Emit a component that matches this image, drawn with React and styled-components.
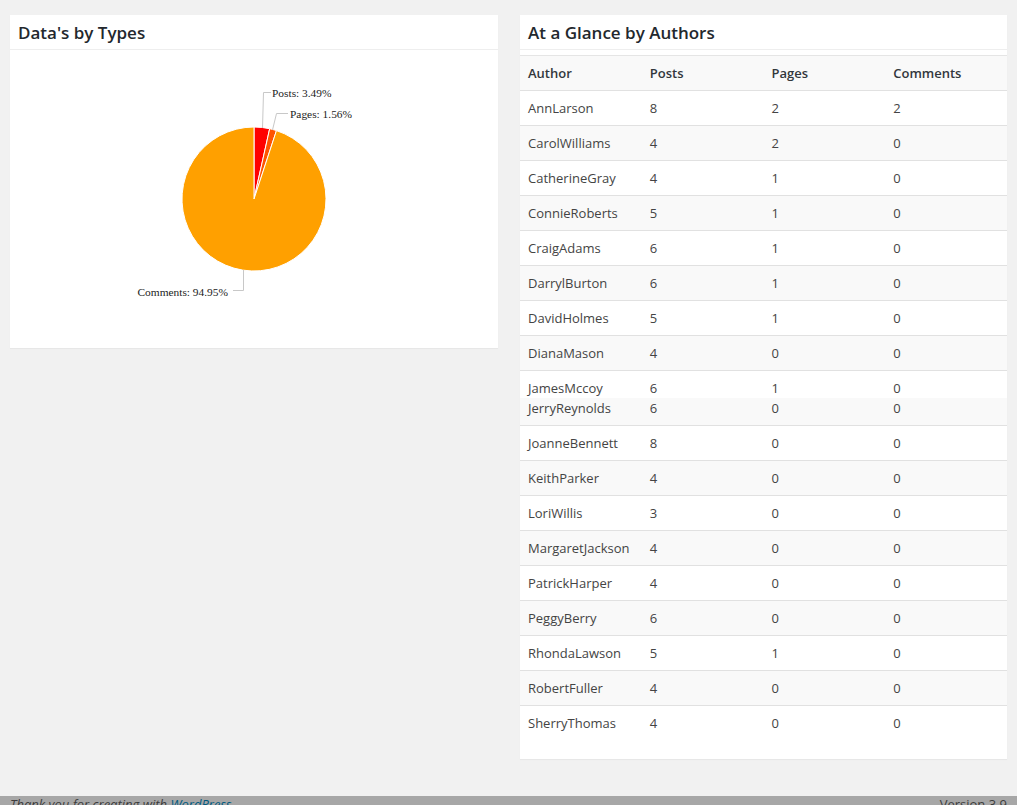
import React from 'react';
import styled, { createGlobalStyle } from 'styled-components';

const GlobalStyle = createGlobalStyle`
  html, body {
    margin: 0;
    padding: 0;
    background: #f1f1f1;
  }
  body {
    font-family: "Open Sans", "Liberation Sans", sans-serif;
    color: #444;
  }
`;

const Page = styled.div`
  display: flex;
  flex-direction: column;
  height: 805px;
  overflow: hidden;
`;

const Main = styled.div`
  flex: 1;
  display: flex;
  align-items: flex-start;
  gap: 22px;
  padding: 15px 10px 0;
`;

const Card = styled.div`
  width: ${({ $width }) => $width}px;
  background: #fff;
  box-shadow: 0 1px 1px rgba(0, 0, 0, 0.04);
  box-sizing: border-box;
  padding-bottom: ${({ $padBottom }) => $padBottom || 0}px;
`;

const CardHeader = styled.h3`
  margin: 0;
  height: 34px;
  padding: 0 8px;
  display: flex;
  align-items: center;
  font-size: 17px;
  font-weight: 600;
  color: #23282d;
  border-bottom: 1px solid #eee;
`;

const ChartArea = styled.div`
  display: flex;
  justify-content: center;
  height: 298px;
`;

const TableWrap = styled.div`
  margin-top: 5px;
  border-top: 1px solid #e5e5e5;
`;

const Row = styled.div`
  display: grid;
  grid-template-columns: repeat(4, 1fr);
  box-sizing: border-box;
  height: ${({ $height }) => $height}px;
  padding-top: ${({ $offset }) => $offset}px;
  overflow: hidden;
  background: ${({ $stripe }) => ($stripe ? '#f9f9f9' : '#fff')};
  border-bottom: ${({ $noBorder }) => ($noBorder ? 'none' : '1px solid #e1e1e1')};
`;

const Cell = styled.div`
  padding: 0 8px;
  font-size: 13px;
  line-height: 20px;
  white-space: nowrap;
  color: #444;
`;

const HeadCell = styled(Cell)`
  font-weight: 600;
  color: #32373c;
`;

const Footer = styled.div`
  height: 9px;
  flex-shrink: 0;
  background: #a7a7a7;
  display: flex;
  justify-content: space-between;
  padding: 0 10px;
  font-size: 13px;
  line-height: 18px;
  font-style: italic;
  color: #3c3c3c;
  overflow: hidden;
`;

const FooterText = styled.span`
  margin-top: -1px;
`;

const FooterLink = styled.a`
  color: #005a80;
  text-decoration: none;
`;

const Version = styled.span`
  font-style: normal;
  margin-top: -1px;
`;

const PIE = [
  { label: 'Posts', value: 3.49, color: '#ff0000' },
  { label: 'Pages', value: 1.56, color: '#ff5400' },
  { label: 'Comments', value: 94.95, color: '#ffa000' },
];

const AUTHORS = [
  ['AnnLarson', 8, 2, 2],
  ['CarolWilliams', 4, 2, 0],
  ['CatherineGray', 4, 1, 0],
  ['ConnieRoberts', 5, 1, 0],
  ['CraigAdams', 6, 1, 0],
  ['DarrylBurton', 6, 1, 0],
  ['DavidHolmes', 5, 1, 0],
  ['DianaMason', 4, 0, 0],
  ['JamesMccoy', 6, 1, 0],
  ['JerryReynolds', 6, 0, 0],
  ['JoanneBennett', 8, 0, 0],
  ['KeithParker', 4, 0, 0],
  ['LoriWillis', 3, 0, 0],
  ['MargaretJackson', 4, 0, 0],
  ['PatrickHarper', 4, 0, 0],
  ['PeggyBerry', 6, 0, 0],
  ['RhondaLawson', 5, 1, 0],
  ['RobertFuller', 4, 0, 0],
  ['SherryThomas', 4, 0, 0],
];

const ROW_SHAPE = {
  JamesMccoy: { height: 27, offset: 7, noBorder: true },
  JerryReynolds: { height: 28, offset: 0 },
};

const CX = 244;
const CY = 149;
const R = 72;

const point = (deg, r = R) => {
  const a = ((deg - 90) * Math.PI) / 180;
  return [CX + r * Math.cos(a), CY + r * Math.sin(a)];
};

const slicePath = (start, end) => {
  const [x1, y1] = point(start);
  const [x2, y2] = point(end);
  const large = end - start > 180 ? 1 : 0;
  return `M${CX},${CY} L${x1},${y1} A${R},${R} 0 ${large} 1 ${x2},${y2} Z`;
};

const PieChart = () => {
  let acc = 0;
  const slices = PIE.map((s) => {
    const start = acc;
    acc += (s.value / 100) * 360;
    return { ...s, start, end: acc };
  });

  return (
    <svg width="488" height="298" viewBox="0 0 488 298">
      {slices.map((s) => (
        <path
          key={s.label}
          d={slicePath(s.start, s.end)}
          fill={s.color}
          stroke="#fff"
          strokeWidth="1"
          strokeLinejoin="round"
        />
      ))}
      <g fill="none" stroke="#c8c8c8" strokeWidth="1">
        <polyline points="252.5,78 253.5,42.5 261,42.5" />
        <polyline points="262.5,80 266.5,63.5 278,63.5" />
        <polyline points="233.5,220 233.5,240.5 223,240.5" />
      </g>
      <g fontFamily='"Liberation Serif", "Times New Roman", serif' fontSize="11.4" fill="#222">
        <text x="262" y="46.5">Posts: 3.49%</text>
        <text x="280" y="67.5">Pages: 1.56%</text>
        <text x="218" y="245.5" textAnchor="end">Comments: 94.95%</text>
      </g>
    </svg>
  );
};

const App = () => (
  <Page>
    <GlobalStyle />
    <Main>
      <Card $width={488}>
        <CardHeader>Data's by Types</CardHeader>
        <ChartArea>
          <PieChart />
        </ChartArea>
      </Card>
      <Card $width={487} $padBottom={19}>
        <CardHeader>At a Glance by Authors</CardHeader>
        <TableWrap>
          <Row $height={35} $offset={7} $stripe>
            <HeadCell>Author</HeadCell>
            <HeadCell>Posts</HeadCell>
            <HeadCell>Pages</HeadCell>
            <HeadCell>Comments</HeadCell>
          </Row>
          {AUTHORS.map(([name, posts, pages, comments], i) => {
            const last = i === AUTHORS.length - 1;
            const shape = ROW_SHAPE[name] || { height: last ? 34 : 35, offset: 7 };
            return (
              <Row
                key={name}
                $height={shape.height}
                $offset={shape.offset}
                $noBorder={shape.noBorder || last}
                $stripe={i % 2 === 1}
              >
                <Cell>{name}</Cell>
                <Cell>{posts}</Cell>
                <Cell>{pages}</Cell>
                <Cell>{comments}</Cell>
              </Row>
            );
          })}
        </TableWrap>
      </Card>
    </Main>
    <Footer>
      <FooterText>
        Thank you for creating with <FooterLink href="#">WordPress</FooterLink>.
      </FooterText>
      <Version>Version 3.9</Version>
    </Footer>
  </Page>
);

export default App;
